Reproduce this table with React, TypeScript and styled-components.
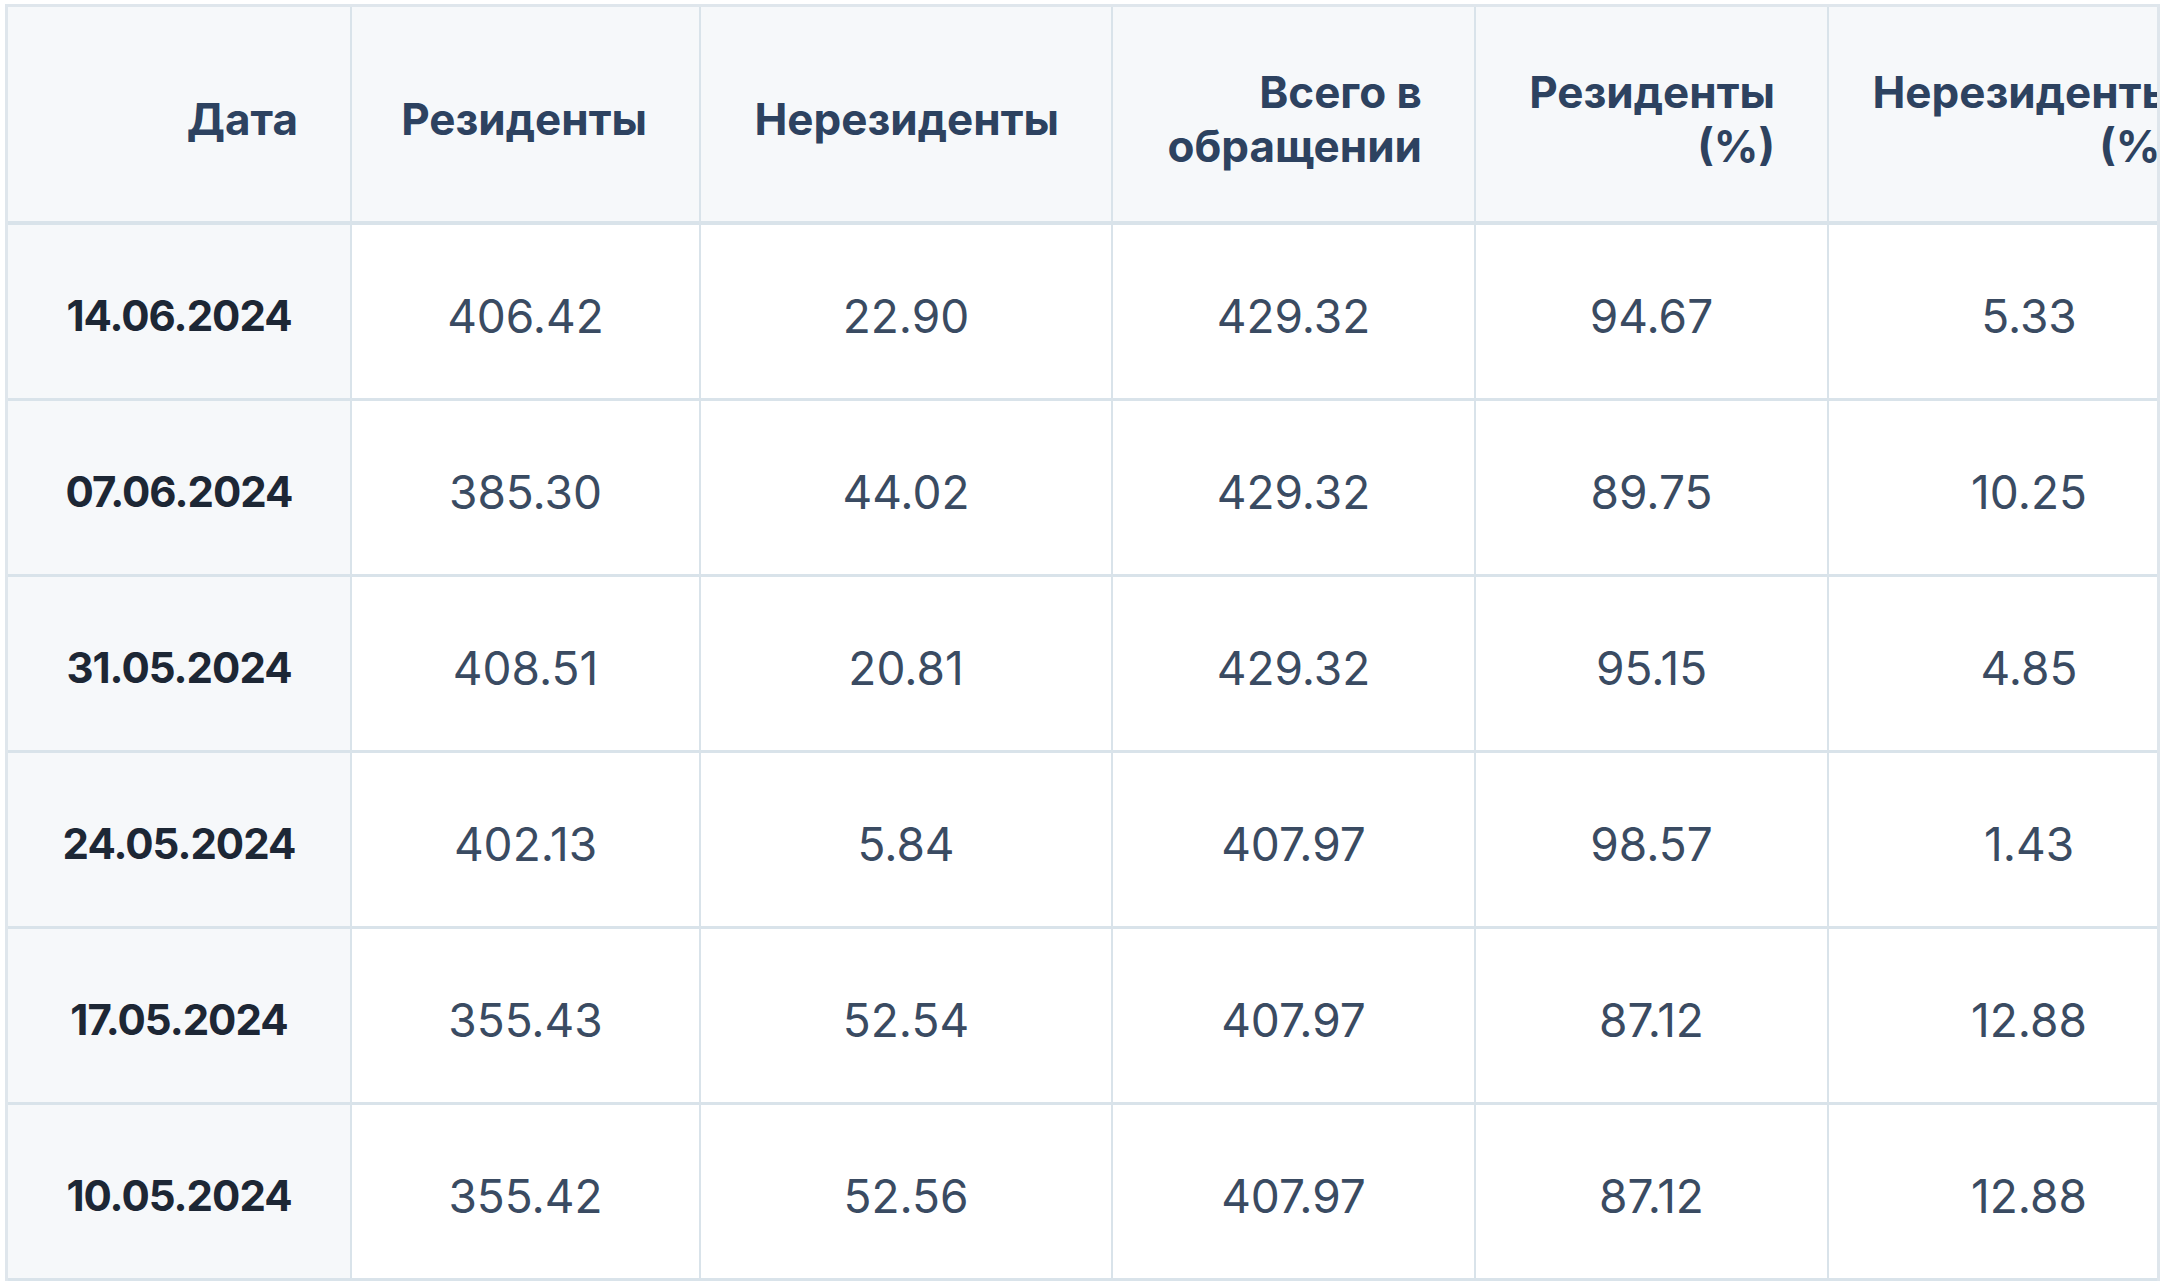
import styled, { createGlobalStyle } from "styled-components";

const GlobalStyle = createGlobalStyle`
    html, body {
        margin: 0;
        padding: 0;
        background: #ffffff;
        overflow: hidden;
    }
    body {
        font-family: Inter, "Noto Sans", sans-serif;
    }
`;

const TableWrap = styled.div`
    margin: 4px 0 0 5px;
    width: 2155px;
    box-sizing: border-box;
    border: 3px solid #dfe6ec;
    border-bottom: none;
    overflow: hidden;
`;

const Table = styled.table`
    table-layout: fixed;
    border-collapse: separate;
    border-spacing: 0;
    width: 2223px;
`;

const HeadCell = styled.th`
    height: 218px;
    box-sizing: border-box;
    padding: 10px 52px 0 20px;
    background: #f6f8fa;
    border-right: 2px solid #d9e3ea;
    border-bottom: 4px solid #d9e3ea;
    text-align: right;
    vertical-align: middle;
    font-size: 44px;
    font-weight: 700;
    line-height: 54px;
    color: #2d4260;
`;

const Cell = styled.td<{ $date?: boolean }>`
    height: 176px;
    box-sizing: border-box;
    padding: 8px 0 0;
    background: ${(props) => (props.$date ? "#f6f8fa" : "#ffffff")};
    border-right: 2px solid #d9e3ea;
    border-bottom: 3px solid #d9e3ea;
    text-align: center;
    vertical-align: middle;
    font-size: ${(props) => (props.$date ? "42px" : "46px")};
    font-weight: ${(props) => (props.$date ? 700 : 400)};
    letter-spacing: ${(props) => (props.$date ? "-1px" : "0")};
    color: ${(props) => (props.$date ? "#1d2735" : "#3a4b62")};
`;

const columns = [
    { title: ["Дата"], width: 344 },
    { title: ["Резиденты"], width: 349 },
    { title: ["Нерезиденты"], width: 412 },
    { title: ["Всего в", "обращении"], width: 363 },
    { title: ["Резиденты", "(%)"], width: 353 },
    { title: ["Нерезиденты", "(%)"], width: 402 },
];

const rows = [
    ["14.06.2024", "406.42", "22.90", "429.32", "94.67", "5.33"],
    ["07.06.2024", "385.30", "44.02", "429.32", "89.75", "10.25"],
    ["31.05.2024", "408.51", "20.81", "429.32", "95.15", "4.85"],
    ["24.05.2024", "402.13", "5.84", "407.97", "98.57", "1.43"],
    ["17.05.2024", "355.43", "52.54", "407.97", "87.12", "12.88"],
    ["10.05.2024", "355.42", "52.56", "407.97", "87.12", "12.88"],
];

function App() {
    return (
        <>
            <GlobalStyle />
            <TableWrap>
                <Table>
                    <colgroup>
                        {columns.map((col, i) => (
                            <col key={i} style={{ width: col.width }} />
                        ))}
                    </colgroup>
                    <thead>
                        <tr>
                            {columns.map((col, i) => (
                                <HeadCell key={i}>
                                    {col.title.map((line, j) => (
                                        <div key={j}>{line}</div>
                                    ))}
                                </HeadCell>
                            ))}
                        </tr>
                    </thead>
                    <tbody>
                        {rows.map((row) => (
                            <tr key={row[0]}>
                                {row.map((value, i) => (
                                    <Cell key={i} $date={i === 0}>
                                        {value}
                                    </Cell>
                                ))}
                            </tr>
                        ))}
                    </tbody>
                </Table>
            </TableWrap>
        </>
    );
}

export default App;
